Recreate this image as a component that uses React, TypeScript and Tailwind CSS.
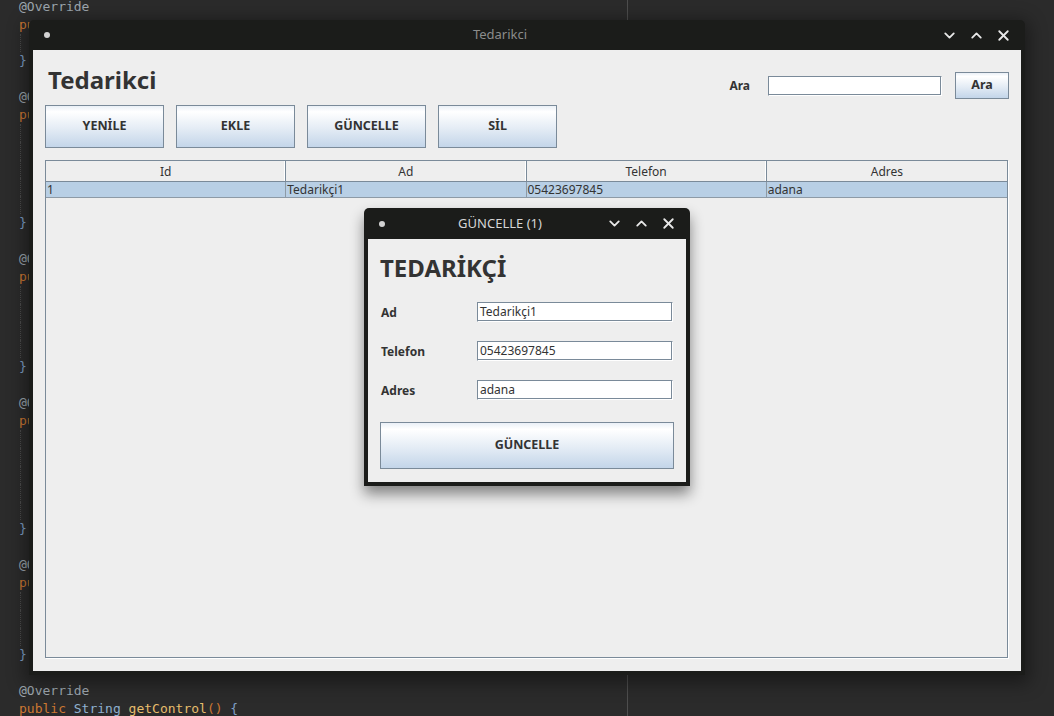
import { ChevronDown, ChevronUp, X } from "lucide-react";

type Tok = { t: string; c: string };

const ANN = "#9ea7af";
const KW = "#cc7832";
const TYPE = "#8fb0cf";
const FN = "#e6bd6c";
const BR = "#7f9fc6";

const ov: Tok[] = [{ t: "@Override", c: ANN }];
// only the first chars of these lines peek out from behind the window
const ovShort: Tok[] = [{ t: "@O", c: ANN }];
const pu: Tok[] = [{ t: "pu", c: KW }];
const sig = (name: string, ret = "String"): Tok[] => [
  { t: "public ", c: KW },
  { t: ret + " ", c: TYPE },
  { t: name, c: FN },
  { t: "() ", c: KW },
  { t: "{", c: BR },
];
const close: Tok[] = [{ t: "}", c: BR }];
const blank: Tok[] = [];

type Line = { toks: Tok[]; guide?: boolean };

const bodyLines = (n: number): Line[] => Array.from({ length: n }, () => ({ toks: blank, guide: true }));

const code: Line[] = [
  { toks: ov },
  { toks: pu },
  ...bodyLines(1),
  { toks: close },
  { toks: blank },
  { toks: ovShort },
  { toks: pu },
  ...bodyLines(5),
  { toks: close },
  { toks: blank },
  { toks: ovShort },
  { toks: pu },
  ...bodyLines(4),
  { toks: close },
  { toks: blank },
  { toks: ovShort },
  { toks: pu },
  ...bodyLines(5),
  { toks: close },
  { toks: blank },
  { toks: ovShort },
  { toks: pu },
  ...bodyLines(3),
  { toks: close },
  { toks: blank },
  { toks: ov },
  { toks: sig("getControl") },
];

const btn =
  "flex items-center justify-center border border-[#7a8a99] bg-[linear-gradient(to_bottom,#eaf0f7,#ffffff_14%,#e4ecf5_55%,#c3d5e9)] text-[12.5px] font-bold text-[#333333]";

const inputCls =
  "h-[20px] border border-[#7a8a99] border-r-white border-b-white bg-white pl-[2px] text-[12px] leading-[18px] text-[#333333] shadow-[inset_-1px_-1px_0_#7a8a99]";

function TitleBar({ title, active }: { title: string; active?: boolean }) {
  return (
    <div className="flex h-full items-center">
      <div className="flex w-[35px] items-center pl-[15px]">
        <span className="block h-[6px] w-[6px] rounded-full bg-[#d2d2d2]" />
      </div>
      <div
        className={
          "flex-1 text-center text-[13px] " +
          (active ? "text-[#d6d6d6]" : "text-[#8c8c8c]")
        }
      >
        {title}
      </div>
      <div className="flex w-[89px] items-center pr-[8px] text-[#e8e8e8]">
        <span className="flex w-[27px] justify-center">
          <ChevronDown size={17} strokeWidth={2.6} />
        </span>
        <span className="flex w-[27px] justify-center">
          <ChevronUp size={17} strokeWidth={2.6} />
        </span>
        <span className="flex w-[27px] justify-center">
          <X size={17} strokeWidth={2.6} />
        </span>
      </div>
    </div>
  );
}

const cols = ["Id", "Ad", "Telefon", "Adres"];
const row = ["1", "Tedarikçi1", "05423697845", "adana"];

function Field({ label, value }: { label: string; value: string }) {
  return (
    <div className="flex h-[20px] items-center">
      <div className="w-[97px] pl-[1px] pt-px text-[12px] font-bold text-[#333333]">{label}</div>
      <div className={inputCls + " w-[196px]"}>{value}</div>
    </div>
  );
}

export default function App() {
  return (
    <div
      className="relative h-[716px] w-[1054px] overflow-hidden bg-[#2b2b2b]"
      style={{ fontFamily: '"Noto Sans", "Open Sans", sans-serif' }}
    >
      {/* editor behind the windows */}
      <div className="flex h-full">
        <div className="h-full w-[628px] border-r border-[#4e4e4e]">
          <div
            className="-mt-[2px] pl-[19px] text-[13px] leading-[18px]"
            style={{ fontFamily: '"DejaVu Sans Mono", "Liberation Mono", monospace' }}
          >
            {code.map((l, i) => (
              <div
                key={i}
                className={
                  "h-[18px] whitespace-pre " +
                  (l.guide ? "ml-px border-l border-dotted border-[#4a4a4a]" : "")
                }
              >
                {l.toks.map((t, j) => (
                  <span key={j} style={{ color: t.c }}>
                    {t.t}
                  </span>
                ))}
              </div>
            ))}
          </div>
        </div>
      </div>

      {/* main window */}
      <div className="absolute left-[29px] top-[20px] flex h-[655px] w-[996px] flex-col rounded-t-[5px] bg-[#1b1c1a] shadow-[0_4px_18px_4px_rgba(0,0,0,0.4)]">
        <div className="h-[30px]">
          <TitleBar title="Tedarikci" />
        </div>
        <div className="mx-[4px] mb-[4px] flex flex-1 flex-col bg-[#eeeeee] px-[12px]">
          <div className="flex h-[55px] justify-between">
            <div className="pl-[3px] pt-[14px] text-[24px] font-bold leading-[32px] text-[#333333]">
              Tedarikci
            </div>
            <div className="mt-[22px] flex h-[27px] items-center">
              <span className="text-[12px] font-bold text-[#333333]">Ara</span>
              <div className={inputCls + " ml-[18px] w-[174px]"} />
              <div className={btn + " ml-[13px] h-[27px] w-[54px]"}>Ara</div>
            </div>
          </div>

          <div className="flex gap-[12px]">
            {["YENİLE", "EKLE", "GÜNCELLE", "SİL"].map((b) => (
              <div key={b} className={btn + " h-[43px] w-[119px]"}>
                {b}
              </div>
            ))}
          </div>

          <div className="mt-[12px] h-[498px] w-[963px] border border-[#7a8a99] bg-[#eeeeee] text-[12px] text-[#333333] shadow-[1px_1px_0_#ffffff]">
            <div className="grid h-[21px] grid-cols-4 border-b border-[#7a8a99]">
              {cols.map((c, i) => (
                <div
                  key={c}
                  className={
                    "flex items-center justify-center bg-[#eeeeee] pt-px leading-none " +
                    (i < 3 ? "border-r border-[#7a8a99] shadow-[inset_-1px_0_0_#ffffff]" : "")
                  }
                >
                  {c}
                </div>
              ))}
            </div>
            <div className="grid h-[16px] grid-cols-4 border-b border-[#8d9aa6] bg-[#b8cfe5]">
              {row.map((v, i) => (
                <div
                  key={i}
                  className={
                    "flex items-center pl-[1px] leading-none " +
                    (i < 3 ? "border-r border-[#8d9aa6]" : "")
                  }
                >
                  {v}
                </div>
              ))}
            </div>
          </div>
        </div>
      </div>

      {/* dialog */}
      <div className="absolute left-[364px] top-[208px] flex h-[278px] w-[326px] flex-col rounded-t-[5px] bg-[#1b1c1a] shadow-[0_8px_14px_rgba(0,0,0,0.45)]">
        <div className="h-[31px]">
          <TitleBar title="GÜNCELLE (1)" active />
        </div>
        <div className="mx-[4px] mb-[4px] flex flex-1 flex-col bg-[#eeeeee] px-[12px] pt-[13px]">
          <div className="text-[24px] font-bold leading-[32px] text-[#333333]">TEDARİKÇİ</div>
          <div className="mt-[18px] flex flex-col gap-[19px]">
            <Field label="Ad" value="Tedarikçi1" />
            <Field label="Telefon" value="05423697845" />
            <Field label="Adres" value="adana" />
          </div>
          <div className={btn + " mt-[22px] h-[47px] w-[294px]"}>GÜNCELLE</div>
        </div>
      </div>
    </div>
  );
}
